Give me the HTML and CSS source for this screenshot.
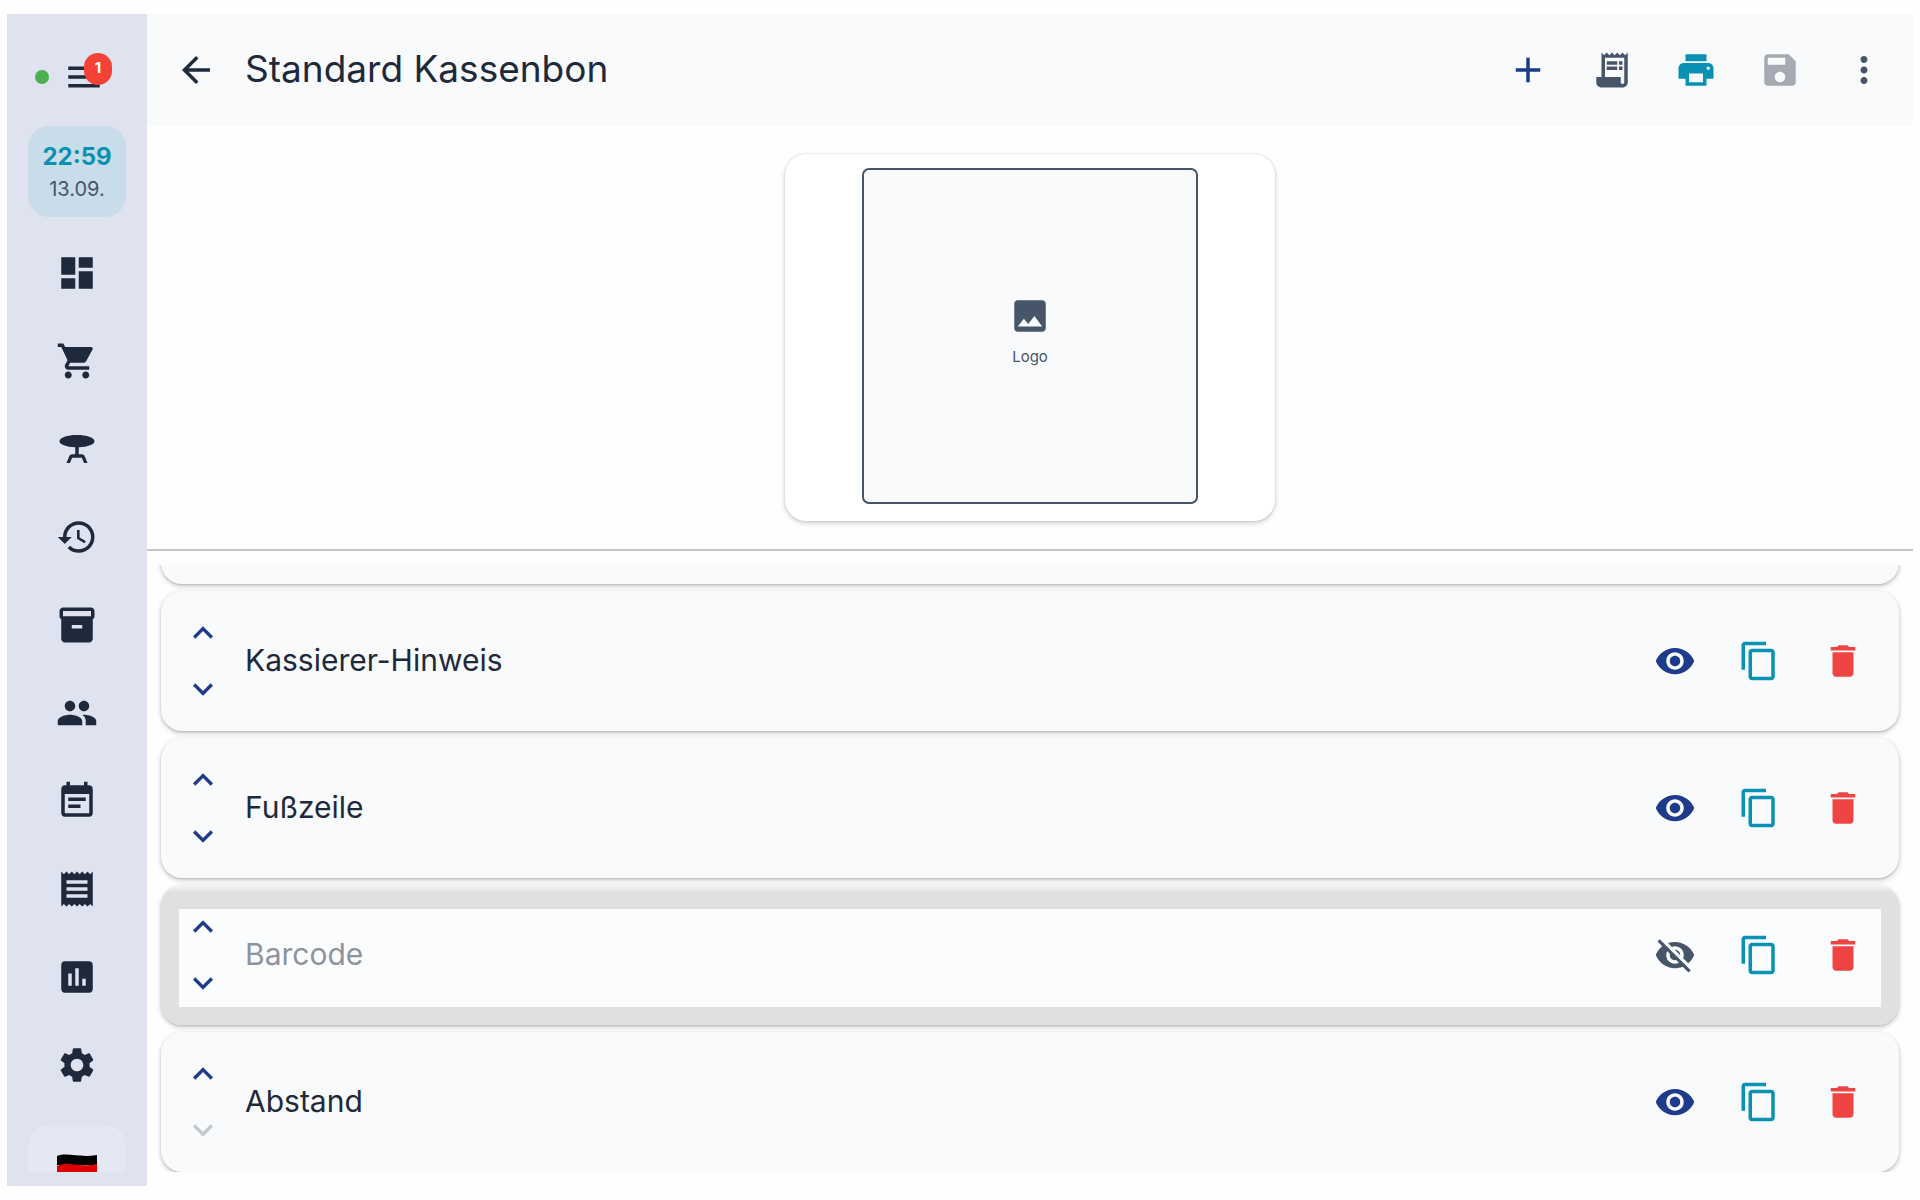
FILE: index.html
```html
<!DOCTYPE html>
<html lang="de">
<head>
    <meta charset="UTF-8">
    <meta name="viewport" content="width=device-width, initial-scale=1.0">
    <title>Standard Kassenbon</title>
    <link rel="stylesheet" href="styles.css">
</head>
<body>

<!-- Icons -->
<svg class="sprite" aria-hidden="true">
    <symbol id="menu" viewBox="0 0 24 24"><path d="M3 18h18v-2H3v2zm0-5h18v-2H3v2zm0-7v2h18V6H3z"/></symbol>
    <symbol id="dashboard" viewBox="0 0 24 24"><path d="M3 13h8V3H3v10zm0 8h8v-6H3v6zm10 0h8V11h-8v10zm0-18v6h8V3h-8z"/></symbol>
    <symbol id="cart" viewBox="0 0 24 24"><path d="M7 18c-1.1 0-1.99.9-1.99 2S5.9 22 7 22s2-.9 2-2-.9-2-2-2zM1 2v2h2l3.6 7.59-1.35 2.45c-.16.28-.25.61-.25.96 0 1.1.9 2 2 2h12v-2H7.42c-.14 0-.25-.11-.25-.25l.03-.12.9-1.63h7.45c.75 0 1.41-.41 1.75-1.03l3.58-6.49c.08-.14.12-.31.12-.48 0-.55-.45-1-1-1H5.21l-.94-2H1zm16 16c-1.1 0-1.99.9-1.99 2s.89 2 1.99 2 2-.9 2-2-.9-2-2-2z"/></symbol>
    <symbol id="table" viewBox="0 0 24 24"><path d="M22 7.5C22 5.57 17.52 4 12 4S2 5.57 2 7.5c0 1.81 3.95 3.31 9 3.48V15H9.35c-.82 0-1.55.5-1.86 1.26L6 20h2l1.2-3h5.6l1.2 3h2l-1.5-3.74c-.3-.76-1.04-1.26-1.85-1.26H13v-4.02c5.05-.17 9-1.67 9-3.48z"/></symbol>
    <symbol id="history" viewBox="0 0 24 24"><path d="M13 3c-4.97 0-9 4.03-9 9H1l3.89 3.89.07.14L9 12H6c0-3.87 3.13-7 7-7s7 3.13 7 7-3.13 7-7 7c-1.93 0-3.68-.79-4.94-2.06l-1.42 1.42C8.27 19.99 10.51 21 13 21c4.97 0 9-4.03 9-9s-4.03-9-9-9zm-1 5v5l4.28 2.54.72-1.21-3.5-2.08V8H12z"/></symbol>
    <symbol id="archive" viewBox="0 0 24 24"><path d="M20 2H4c-1 0-2 .9-2 2v3.01c0 .72.43 1.34 1 1.69V20c0 1.1 1.1 2 2 2h14c.9 0 2-.9 2-2V8.7c.57-.35 1-.97 1-1.69V4c0-1.1-1-2-2-2zm-5 12H9v-2h6v2zm5-7H4V4l16-.02V7z"/></symbol>
    <symbol id="people" viewBox="0 0 24 24"><path d="M16 11c1.66 0 2.99-1.34 2.99-3S17.66 5 16 5c-1.66 0-3 1.34-3 3s1.34 3 3 3zm-8 0c1.66 0 2.99-1.34 2.99-3S9.66 5 8 5C6.34 5 5 6.34 5 8s1.34 3 3 3zm0 2c-2.33 0-7 1.17-7 3.5V19h14v-2.5c0-2.33-4.67-3.5-7-3.5zm8 0c-.29 0-.62.02-.97.05 1.16.84 1.97 1.97 1.97 3.45V19h6v-2.5c0-2.33-4.67-3.5-7-3.5z"/></symbol>
    <symbol id="calendar" viewBox="0 0 24 24"><path d="M17 10H7v2h10v-2zm2-7h-1V1h-2v2H8V1H6v2H5c-1.11 0-1.99.9-1.99 2L3 19c0 1.1.89 2 2 2h14c1.1 0 2-.9 2-2V5c0-1.1-.9-2-2-2zm0 16H5V8h14v11zm-5-5H7v2h7v-2z"/></symbol>
    <symbol id="receipt" viewBox="0 0 24 24"><path d="M18 17H6v-2h12v2zm0-4H6v-2h12v2zm0-4H6V7h12v2zM3 22l1.5-1.5L6 22l1.5-1.5L9 22l1.5-1.5L12 22l1.5-1.5L15 22l1.5-1.5L18 22l1.5-1.5L21 22V2l-1.5 1.5L18 2l-1.5 1.5L15 2l-1.5 1.5L12 2l-1.5 1.5L9 2 7.5 3.5 6 2 4.5 3.5 3 2v20z"/></symbol>
    <symbol id="chart" viewBox="0 0 24 24"><path d="M19 3H5c-1.1 0-2 .9-2 2v14c0 1.1.9 2 2 2h14c1.1 0 2-.9 2-2V5c0-1.1-.9-2-2-2zM9 17H7v-7h2v7zm4 0h-2V7h2v10zm4 0h-2v-4h2v4z"/></symbol>
    <symbol id="settings" viewBox="0 0 24 24"><path d="M19.14 12.94c.04-.3.06-.61.06-.94 0-.32-.02-.64-.07-.94l2.03-1.58c.18-.14.23-.41.12-.61l-1.92-3.32c-.12-.22-.37-.29-.59-.22l-2.39.96c-.5-.38-1.03-.7-1.62-.94l-.36-2.54c-.04-.24-.24-.41-.48-.41h-3.84c-.24 0-.43.17-.47.41l-.36 2.54c-.59.24-1.13.57-1.62.94l-2.39-.96c-.22-.08-.47 0-.59.22L2.74 8.87c-.12.21-.08.47.12.61l2.03 1.58c-.05.3-.09.63-.09.94s.02.64.07.94l-2.03 1.58c-.18.14-.23.41-.12.61l1.92 3.32c.12.22.37.29.59.22l2.39-.96c.5.38 1.03.7 1.62.94l.36 2.54c.05.24.24.41.48.41h3.84c.24 0 .44-.17.47-.41l.36-2.54c.59-.24 1.13-.56 1.62-.94l2.39.96c.22.08.47 0 .59-.22l1.92-3.32c.12-.22.07-.47-.12-.61l-2.01-1.58zM12 15.6c-1.98 0-3.6-1.62-3.6-3.6s1.62-3.6 3.6-3.6 3.6 1.62 3.6 3.6-1.62 3.6-3.6 3.6z"/></symbol>
    <symbol id="back" viewBox="0 0 24 24"><path d="M20 11H7.83l5.59-5.59L12 4l-8 8 8 8 1.41-1.41L7.83 13H20v-2z"/></symbol>
    <symbol id="add" viewBox="0 0 24 24"><path d="M19 13h-6v6h-2v-6H5v-2h6V5h2v6h6v2z"/></symbol>
    <symbol id="receipt-long" viewBox="0 0 24 24"><path d="M19.5 3.5L18 2l-1.5 1.5L15 2l-1.5 1.5L12 2l-1.5 1.5L9 2 7.5 3.5 6 2v14H3v3c0 1.66 1.34 3 3 3h12c1.66 0 3-1.34 3-3V2l-1.5 1.5zM19 19c0 .55-.45 1-1 1s-1-.45-1-1v-3H8V5h11v14zM9 7h6v2H9zM16 7h2v2h-2zM9 10h6v2H9zM16 10h2v2h-2z"/></symbol>
    <symbol id="print" viewBox="0 0 24 24"><path d="M19 8H5c-1.66 0-3 1.34-3 3v6h4v4h12v-4h4v-6c0-1.66-1.34-3-3-3zm-3 11H8v-5h8v5zm3-7c-.55 0-1-.45-1-1s.45-1 1-1 1 .45 1 1-.45 1-1 1zm-1-9H6v4h12V3z"/></symbol>
    <symbol id="save" viewBox="0 0 24 24"><path d="M17 3H5c-1.11 0-2 .9-2 2v14c0 1.1.89 2 2 2h14c1.1 0 2-.9 2-2V7l-4-4zm-5 16c-1.66 0-3-1.34-3-3s1.34-3 3-3 3 1.34 3 3-1.34 3-3 3zm3-10H5V5h10v4z"/></symbol>
    <symbol id="more" viewBox="0 0 24 24"><path d="M12 8c1.1 0 2-.9 2-2s-.9-2-2-2-2 .9-2 2 .9 2 2 2zm0 2c-1.1 0-2 .9-2 2s.9 2 2 2 2-.9 2-2-.9-2-2-2zm0 6c-1.1 0-2 .9-2 2s.9 2 2 2 2-.9 2-2-.9-2-2-2z"/></symbol>
    <symbol id="image" viewBox="0 0 24 24"><path d="M21 19V5c0-1.1-.9-2-2-2H5c-1.1 0-2 .9-2 2v14c0 1.1.9 2 2 2h14c1.1 0 2-.9 2-2zM8.5 13.5l2.5 3.01L14.5 12l4.5 6H5l3.5-4.5z"/></symbol>
    <symbol id="up" viewBox="0 0 24 24"><path d="M7.41 15.41L12 10.83l4.59 4.58L18 14l-6-6-6 6z"/></symbol>
    <symbol id="down" viewBox="0 0 24 24"><path d="M7.41 8.59L12 13.17l4.59-4.58L18 10l-6 6-6-6z"/></symbol>
    <symbol id="eye" viewBox="0 0 24 24"><path d="M12 4.5C7 4.5 2.73 7.61 1 12c1.73 4.39 6 7.5 11 7.5s9.27-3.11 11-7.5c-1.73-4.39-6-7.5-11-7.5zM12 17c-2.76 0-5-2.24-5-5s2.24-5 5-5 5 2.24 5 5-2.24 5-5 5zm0-8c-1.66 0-3 1.34-3 3s1.34 3 3 3 3-1.34 3-3-1.34-3-3-3z"/></symbol>
    <symbol id="eye-off" viewBox="0 0 24 24"><path d="M12 7c2.76 0 5 2.24 5 5 0 .65-.13 1.26-.36 1.83l2.92 2.92c1.51-1.26 2.7-2.89 3.43-4.75-1.73-4.39-6-7.5-11-7.5-1.4 0-2.74.25-3.98.7l2.16 2.16C10.74 7.13 11.35 7 12 7zM2 4.27l2.28 2.28.46.46C3.08 8.3 1.78 10.02 1 12c1.73 4.39 6 7.5 11 7.5 1.55 0 3.03-.3 4.38-.84l.42.42L19.73 22 21 20.73 3.27 3 2 4.27zM7.53 9.8l1.55 1.55c-.05.21-.08.43-.08.65 0 1.66 1.34 3 3 3 .22 0 .44-.03.65-.08l1.55 1.55c-.67.33-1.41.53-2.2.53-2.76 0-5-2.24-5-5 0-.79.2-1.53.53-2.2zm4.31-.78l3.15 3.15.02-.16c0-1.66-1.34-3-3-3l-.17.01z"/></symbol>
    <symbol id="copy" viewBox="0 0 24 24"><path d="M16 1H4c-1.1 0-2 .9-2 2v14h2V3h12V1zm3 4H8c-1.1 0-2 .9-2 2v14c0 1.1.9 2 2 2h11c1.1 0 2-.9 2-2V7c0-1.1-.9-2-2-2zm0 16H8V7h11v14z"/></symbol>
    <symbol id="trash" viewBox="0 0 24 24"><path d="M6 19c0 1.1.9 2 2 2h8c1.1 0 2-.9 2-2V7H6v12zM19 4h-3.5l-1-1h-5l-1 1H5v2h14V4z"/></symbol>
</svg>

<aside class="sidebar">
    <div class="menu-row">
        <span class="online-dot"></span>
        <button class="menu-btn" aria-label="Menü"><svg class="icon"><use href="#menu"/></svg><span class="badge">1</span></button>
    </div>
    <div class="clock">
        <div class="time">22:59</div>
        <div class="date">13.09.</div>
    </div>
    <nav class="nav">
        <a href="#" aria-label="Dashboard"><svg class="icon"><use href="#dashboard"/></svg></a>
        <a href="#" aria-label="Verkauf"><svg class="icon"><use href="#cart"/></svg></a>
        <a href="#" aria-label="Tische"><svg class="icon"><use href="#table"/></svg></a>
        <a href="#" aria-label="Verlauf"><svg class="icon"><use href="#history"/></svg></a>
        <a href="#" aria-label="Artikel"><svg class="icon"><use href="#archive"/></svg></a>
        <a href="#" aria-label="Kunden"><svg class="icon"><use href="#people"/></svg></a>
        <a href="#" aria-label="Kalender"><svg class="icon"><use href="#calendar"/></svg></a>
        <a href="#" aria-label="Belege"><svg class="icon"><use href="#receipt"/></svg></a>
        <a href="#" aria-label="Berichte"><svg class="icon"><use href="#chart"/></svg></a>
        <a href="#" aria-label="Einstellungen"><svg class="icon"><use href="#settings"/></svg></a>
        <button class="language" aria-label="Sprache">
            <svg class="flag" viewBox="0 0 40 30">
                <path d="M0 2C10-2 22 4 40 1v10H0z" fill="#000"/>
                <path d="M0 12C10 7 22 14 40 10v10H0z" fill="#d00"/>
                <path d="M0 21C10 17 22 23 40 20v8C22 31 10 26 0 29z" fill="#ffce00"/>
            </svg>
        </button>
    </nav>
</aside>

<main class="main">
    <header class="topbar">
        <button class="icon-btn dark" aria-label="Zurück"><svg class="icon"><use href="#back"/></svg></button>
        <h1>Standard Kassenbon</h1>
        <button class="icon-btn blue" aria-label="Hinzufügen"><svg class="icon"><use href="#add"/></svg></button>
        <button class="icon-btn slate" aria-label="Beleg"><svg class="icon"><use href="#receipt-long"/></svg></button>
        <button class="icon-btn teal" aria-label="Drucken"><svg class="icon"><use href="#print"/></svg></button>
        <button class="icon-btn save" aria-label="Speichern" disabled><svg class="icon"><use href="#save"/></svg></button>
        <button class="icon-btn slate" aria-label="Mehr"><svg class="icon"><use href="#more"/></svg></button>
    </header>

    <section class="preview">
        <div class="paper">
            <div class="logo-box">
                <svg class="icon"><use href="#image"/></svg>
                <span>Logo</span>
            </div>
        </div>
    </section>

    <section class="list">
        <div class="card"></div>
        <div class="card">
            <div class="move">
                <button class="blue" aria-label="Nach oben"><svg class="chevron"><use href="#up"/></svg></button>
                <button class="blue" aria-label="Nach unten"><svg class="chevron"><use href="#down"/></svg></button>
            </div>
            <div class="name">Kassierer-Hinweis</div>
            <button class="icon-btn blue" aria-label="Ausblenden"><svg class="icon"><use href="#eye"/></svg></button>
            <button class="icon-btn teal" aria-label="Kopieren"><svg class="icon"><use href="#copy"/></svg></button>
            <button class="icon-btn red" aria-label="Löschen"><svg class="icon"><use href="#trash"/></svg></button>
        </div>
        <div class="card">
            <div class="move">
                <button class="blue" aria-label="Nach oben"><svg class="chevron"><use href="#up"/></svg></button>
                <button class="blue" aria-label="Nach unten"><svg class="chevron"><use href="#down"/></svg></button>
            </div>
            <div class="name">Fußzeile</div>
            <button class="icon-btn blue" aria-label="Ausblenden"><svg class="icon"><use href="#eye"/></svg></button>
            <button class="icon-btn teal" aria-label="Kopieren"><svg class="icon"><use href="#copy"/></svg></button>
            <button class="icon-btn red" aria-label="Löschen"><svg class="icon"><use href="#trash"/></svg></button>
        </div>
        <div class="card hidden-item">
            <div class="move">
                <button class="blue" aria-label="Nach oben"><svg class="chevron"><use href="#up"/></svg></button>
                <button class="blue" aria-label="Nach unten"><svg class="chevron"><use href="#down"/></svg></button>
            </div>
            <div class="name">Barcode</div>
            <button class="icon-btn slate" aria-label="Einblenden"><svg class="icon"><use href="#eye-off"/></svg></button>
            <button class="icon-btn teal" aria-label="Kopieren"><svg class="icon"><use href="#copy"/></svg></button>
            <button class="icon-btn red" aria-label="Löschen"><svg class="icon"><use href="#trash"/></svg></button>
        </div>
        <div class="card">
            <div class="move">
                <button class="blue" aria-label="Nach oben"><svg class="chevron"><use href="#up"/></svg></button>
                <button aria-label="Nach unten" disabled><svg class="chevron"><use href="#down"/></svg></button>
            </div>
            <div class="name">Abstand</div>
            <button class="icon-btn blue" aria-label="Ausblenden"><svg class="icon"><use href="#eye"/></svg></button>
            <button class="icon-btn teal" aria-label="Kopieren"><svg class="icon"><use href="#copy"/></svg></button>
            <button class="icon-btn red" aria-label="Löschen"><svg class="icon"><use href="#trash"/></svg></button>
        </div>
    </section>
</main>

</body>
</html>
```
FILE: styles.css
```css
* {
    box-sizing: border-box;
}
body {
    margin: 0;
    padding: 14px 7px;
    height: 100vh;
    display: flex;
    overflow: hidden;
    background: #fefefe;
    color: #1e293b;
    font-family: Inter, "Liberation Sans", sans-serif;
}
button {
    padding: 0;
    border: none;
    background: none;
    color: inherit;
    font: inherit;
    cursor: pointer;
}
.sprite {
    display: none;
}
.icon {
    display: block;
    width: 42px;
    height: 42px;
    fill: currentColor;
}
.chevron {
    display: block;
    width: 40px;
    height: 40px;
    fill: currentColor;
}
.blue {
    color: #1e3a8a;
}
.teal {
    color: #0891b2;
}
.slate {
    color: #475569;
}
.red {
    color: #ef4444;
}

/* Sidebar */
.sidebar {
    flex: none;
    width: 140px;
    padding: 14px 0;
    display: flex;
    flex-direction: column;
    align-items: center;
    background: #dfe2ef;
}
.menu-row {
    flex: none;
    height: 98px;
    display: flex;
    align-items: center;
    gap: 14px;
    padding-right: 14px;
}
.online-dot {
    width: 14px;
    height: 14px;
    border-radius: 50%;
    background: #4caf50;
}
.menu-btn {
    position: relative;
}
.badge {
    position: absolute;
    top: -3px;
    right: -7px;
    width: 28px;
    height: 32px;
    border-radius: 14px;
    background: #f44336;
    color: white;
    font-size: 15px;
    font-weight: 700;
    line-height: 30px;
    text-align: center;
}
.clock {
    flex: none;
    width: 98px;
    height: 91px;
    padding-top: 15px;
    border-radius: 21px;
    background: #c8dce9;
    text-align: center;
}
.time {
    color: #0891b2;
    font-size: 24px;
    font-weight: 700;
    line-height: 32px;
}
.date {
    color: #475569;
    font-size: 20px;
    line-height: 32px;
}
.nav {
    flex: 1;
    min-height: 0;
    width: 98px;
    padding-top: 12px;
    overflow: hidden;
}
.nav a {
    height: 88px;
    display: flex;
    align-items: center;
    justify-content: center;
    color: #1e293b;
}
.language {
    width: 98px;
    height: 91px;
    margin-top: 16px;
    border-radius: 21px;
    background: #e5e8f3;
}
.flag {
    width: 40px;
    height: 30px;
}

/* Main area */
.main {
    flex: 1;
    min-width: 0;
    display: flex;
    flex-direction: column;
}
.icon-btn {
    flex: none;
    width: 84px;
    height: 84px;
    display: flex;
    align-items: center;
    justify-content: center;
}
.topbar {
    flex: none;
    height: 112px;
    padding: 0 7px;
    display: flex;
    align-items: center;
    background: #f8fafc;
}
.topbar h1 {
    flex: 1;
    margin: 0;
    padding: 0 0 3px 7px;
    font-size: 37px;
    font-weight: 400;
    line-height: 48px;
}
.save {
    color: #a5aab3;
}
.preview {
    flex: none;
    padding: 28px;
    display: flex;
    justify-content: center;
    border-bottom: 2px solid #c6c6cd;
}
.paper {
    width: 490px;
    padding: 14px 14px 17px;
    border-radius: 21px;
    background: white;
    box-shadow: 0 2px 5px rgba(0,0,0,0.2), 0 0 2px rgba(0,0,0,0.14);
}
.logo-box {
    width: 336px;
    height: 336px;
    margin: 0 auto;
    padding-bottom: 10px;
    display: flex;
    flex-direction: column;
    align-items: center;
    justify-content: center;
    gap: 10px;
    border: 2px solid #475569;
    border-radius: 7px;
    background: #f8fafc;
    color: #475569;
    font-size: 15px;
    line-height: 20px;
}

/* Cards, scrolled to the end */
.list {
    flex: 1;
    min-height: 0;
    margin: 14px 0;
    padding: 0 14px;
    display: flex;
    flex-direction: column;
    justify-content: flex-end;
    gap: 7px;
    overflow: hidden;
}
.card {
    flex: none;
    height: 140px;
    padding-right: 14px;
    display: flex;
    align-items: center;
    border-radius: 21px;
    background: #f8fafc;
    box-shadow: 0 2px 5px rgba(0,0,0,0.22), 0 1px 2px rgba(0,0,0,0.12);
}
.move {
    width: 84px;
    display: flex;
    flex-direction: column;
    align-items: center;
    gap: 16px;
}
.move button:disabled {
    color: #c3c8cf;
}
.name {
    flex: 1;
    padding-bottom: 3px;
    font-size: 30px;
    line-height: 40px;
}
/* Switched-off item: pale panel inside a grey frame */
.hidden-item {
    background: linear-gradient(#fbfcfe, #fbfcfe) 18px 24px / calc(100% - 36px) calc(100% - 42px) no-repeat, linear-gradient(#f4f5f6, #dfe0e2 8px);
}
.hidden-item .name {
    color: #8e939c;
}
```
